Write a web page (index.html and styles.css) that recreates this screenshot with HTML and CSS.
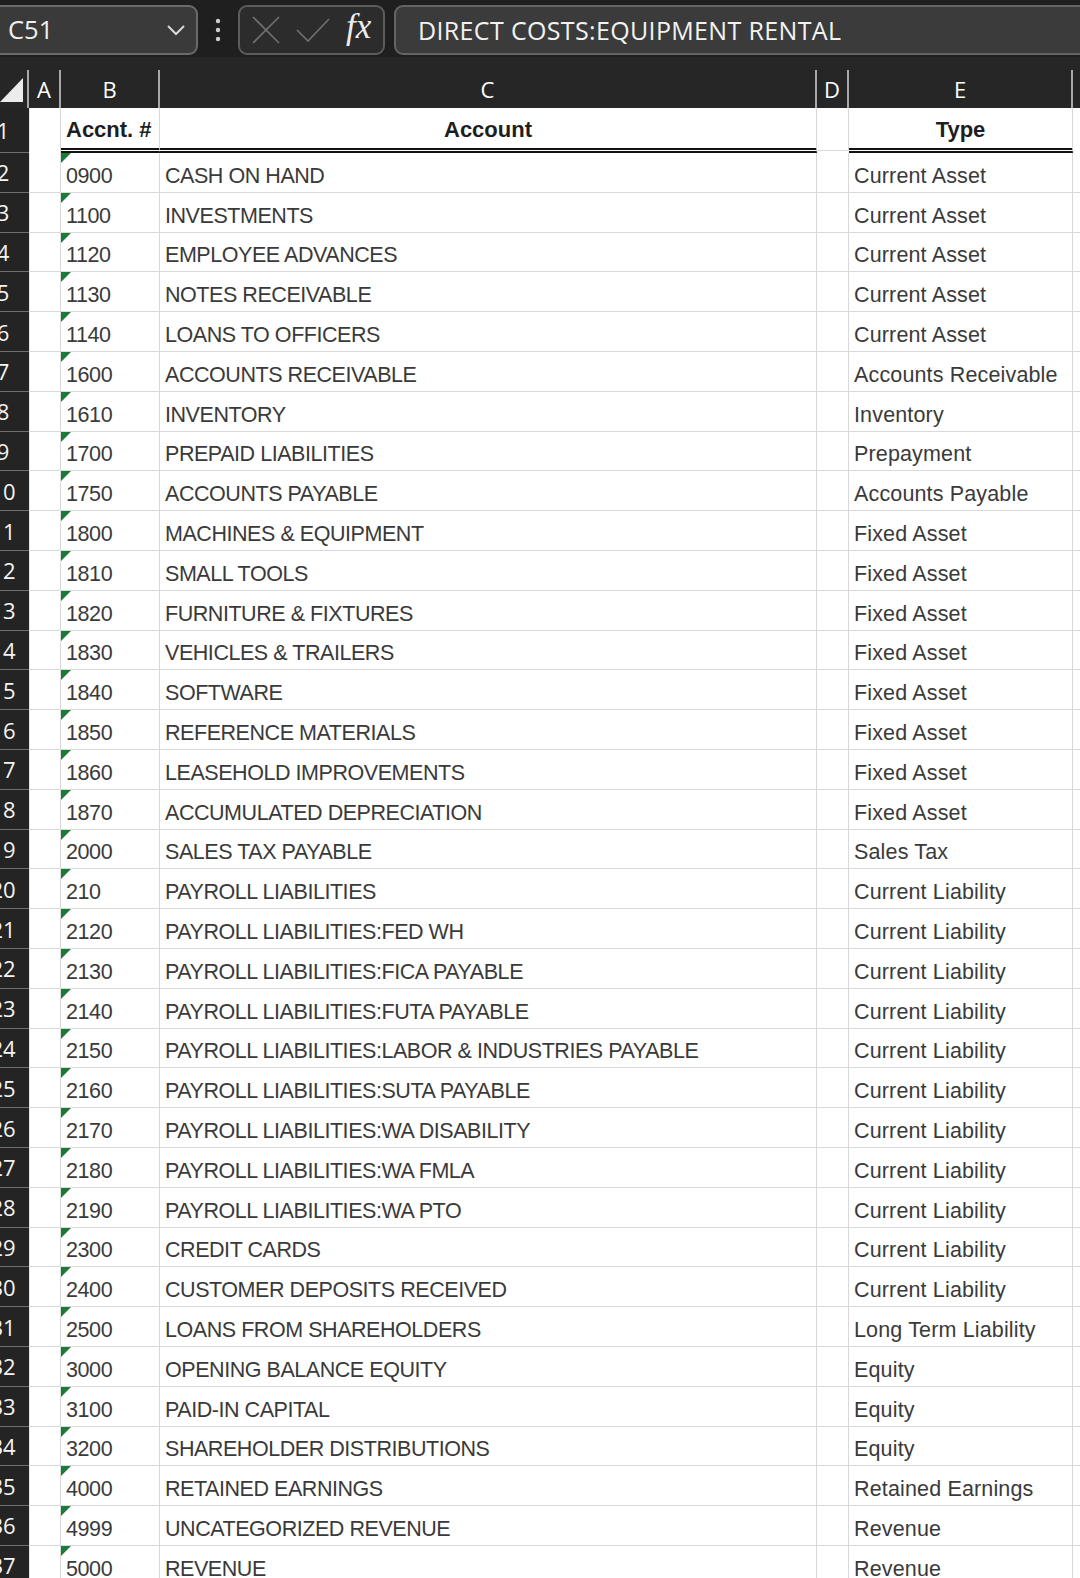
FILE: index.html
```html
<!DOCTYPE html>
<html>
<head>
<meta charset="utf-8">
<link rel="stylesheet" href="styles.css">
</head>
<body>
<div class="app">
  <div class="topbar">
    <div class="namebox">
      <span class="name">C51</span>
      <svg class="chev" width="20" height="12" viewBox="0 0 20 12"><path d="M2 2 L10 10 L18 2" fill="none" stroke="#d8d8d8" stroke-width="2"/></svg>
    </div>
    <svg class="dots" width="8" height="26" viewBox="0 0 8 26"><circle cx="4" cy="4" r="2.2" fill="#cfcfcf"/><circle cx="4" cy="13" r="2.2" fill="#cfcfcf"/><circle cx="4" cy="22" r="2.2" fill="#cfcfcf"/></svg>
    <div class="fxbox">
      <svg width="28" height="28" viewBox="0 0 28 28"><path d="M1 1 L27 27 M27 1 L1 27" stroke="#707070" stroke-width="1.6" fill="none"/></svg>
      <svg width="36" height="28" viewBox="0 0 36 28"><path d="M2 14 L13 25 L34 3" stroke="#707070" stroke-width="1.6" fill="none"/></svg>
      <span class="fx">fx</span>
    </div>
    <div class="formula">DIRECT COSTS:EQUIPMENT RENTAL</div>
  </div>

  <div class="colheads">
    <div class="corner"><svg width="23" height="24" viewBox="0 0 23 24"><polygon points="0,24 23,24 23,0" fill="#ececec"/></svg></div>
    <div class="ch">A</div>
    <div class="ch">B</div>
    <div class="ch">C</div>
    <div class="ch">D</div>
    <div class="ch">E</div>
    <div class="ch last"></div>
  </div>

  <div class="sheet" id="sheet">
    <div class="row head">
      <div class="rh"><span>1</span></div>
      <div class="c a"></div>
      <div class="c b hb">Accnt. #</div>
      <div class="c cc hb center">Account</div>
      <div class="c d"></div>
      <div class="c e hb center">Type</div>
      <div class="c f"></div>
    </div>
  </div>
</div>
<script src="app.js"></script>
</body>
</html>
```

FILE: app.js
```js
const data = [
["0900","CASH ON HAND","Current Asset"],
["1100","INVESTMENTS","Current Asset"],
["1120","EMPLOYEE ADVANCES","Current Asset"],
["1130","NOTES RECEIVABLE","Current Asset"],
["1140","LOANS TO OFFICERS","Current Asset"],
["1600","ACCOUNTS RECEIVABLE","Accounts Receivable"],
["1610","INVENTORY","Inventory"],
["1700","PREPAID LIABILITIES","Prepayment"],
["1750","ACCOUNTS PAYABLE","Accounts Payable"],
["1800","MACHINES & EQUIPMENT","Fixed Asset"],
["1810","SMALL TOOLS","Fixed Asset"],
["1820","FURNITURE & FIXTURES","Fixed Asset"],
["1830","VEHICLES & TRAILERS","Fixed Asset"],
["1840","SOFTWARE","Fixed Asset"],
["1850","REFERENCE MATERIALS","Fixed Asset"],
["1860","LEASEHOLD IMPROVEMENTS","Fixed Asset"],
["1870","ACCUMULATED DEPRECIATION","Fixed Asset"],
["2000","SALES TAX PAYABLE","Sales Tax"],
["210","PAYROLL LIABILITIES","Current Liability"],
["2120","PAYROLL LIABILITIES:FED WH","Current Liability"],
["2130","PAYROLL LIABILITIES:FICA PAYABLE","Current Liability"],
["2140","PAYROLL LIABILITIES:FUTA PAYABLE","Current Liability"],
["2150","PAYROLL LIABILITIES:LABOR & INDUSTRIES PAYABLE","Current Liability"],
["2160","PAYROLL LIABILITIES:SUTA PAYABLE","Current Liability"],
["2170","PAYROLL LIABILITIES:WA DISABILITY","Current Liability"],
["2180","PAYROLL LIABILITIES:WA FMLA","Current Liability"],
["2190","PAYROLL LIABILITIES:WA PTO","Current Liability"],
["2300","CREDIT CARDS","Current Liability"],
["2400","CUSTOMER DEPOSITS RECEIVED","Current Liability"],
["2500","LOANS FROM SHAREHOLDERS","Long Term Liability"],
["3000","OPENING BALANCE EQUITY","Equity"],
["3100","PAID-IN CAPITAL","Equity"],
["3200","SHAREHOLDER DISTRIBUTIONS","Equity"],
["4000","RETAINED EARNINGS","Retained Earnings"],
["4999","UNCATEGORIZED REVENUE","Revenue"],
["5000","REVENUE","Revenue"]
];
const sheet = document.getElementById('sheet');
data.forEach((r, i) => {
  const row = document.createElement('div');
  row.className = 'row';
  row.innerHTML =
    '<div class="rh"><span>' + (i + 2) + '</span></div>' +
    '<div class="c a"></div>' +
    '<div class="c b num"><i class="tri"></i>' + r[0] + '</div>' +
    '<div class="c cc txt"></div>' +
    '<div class="c d"></div>' +
    '<div class="c e typ"></div>' +
    '<div class="c f"></div>';
  row.querySelector('.cc').textContent = r[1];
  row.querySelector('.e').textContent = r[2];
  sheet.appendChild(row);
});
```

FILE: styles.css
```css
html, body {
  margin: 0;
  padding: 0;
  background: #ffffff;
}
body {
  width: 1080px;
  height: 1578px;
  overflow: hidden;
}
.app {
  --cols: 29px 32px 99px 657px 32px 224px 1fr;
}
.topbar {
  height: 57px;
  background: #1f1f1f;
  display: flex;
  align-items: flex-start;
  padding-top: 5px;
  box-sizing: border-box;
  overflow: hidden;
}
.namebox {
  margin-left: -12px;
  width: 210px;
  height: 50px;
  box-sizing: border-box;
  border: 2px solid #6a6a6a;
  border-radius: 9px;
  background: #3a3a3a;
  display: flex;
  align-items: center;
  justify-content: space-between;
  padding: 0 10px 0 18px;
  flex: none;
}
.name {
  font-family: "Open Sans", "Noto Sans", sans-serif;
  font-size: 25.5px;
  color: #f0f0f0;
  margin-top: -2px;
}
.dots {
  margin: 12px 16px 0 16px;
  flex: none;
}
.fxbox {
  width: 147px;
  height: 50px;
  box-sizing: border-box;
  border: 2px solid #5c5c5c;
  border-radius: 9px;
  background: #2c2c2c;
  display: flex;
  align-items: center;
  gap: 15px;
  padding-left: 12px;
  flex: none;
}
.fx {
  font-family: "Liberation Serif", serif;
  font-style: italic;
  font-size: 35px;
  color: #ececec;
  margin-top: -6px;
  margin-left: 0;
}
.formula {
  margin-left: 9px;
  width: 720px;
  height: 50px;
  box-sizing: border-box;
  border: 2px solid #646464;
  border-radius: 9px;
  background: #3b3b3b;
  font-family: "Open Sans", "Noto Sans", sans-serif;
  font-size: 25px;
  letter-spacing: 0.35px;
  color: #f2f2f2;
  display: flex;
  align-items: center;
  padding-left: 22px;
  flex: none;
  white-space: nowrap;
}
.colheads {
  display: grid;
  grid-template-columns: var(--cols);
  height: 51px;
  background: #262626;
  padding-top: 13px;
  box-sizing: border-box;
}
.ch {
  font-family: "Open Sans", "Noto Sans", sans-serif;
  font-size: 22px;
  color: #ffffff;
  display: flex;
  align-items: center;
  justify-content: center;
  border-right: 2px solid #a8a8a8;
}
.ch.last { border-right: 0; }
.corner {
  border-right: 2px solid #a8a8a8;
  display: flex;
  align-items: flex-end;
  padding-bottom: 6px;
}
.sheet {
  display: flex;
  flex-direction: column;
}
.row {
  display: grid;
  grid-template-columns: var(--cols);
  height: 39.8px;
  flex: none;
}
.row.head {
  height: 45px;
}
.rh {
  background: #242424;
  border-bottom: 1px solid #6e6e6e;
  overflow: hidden;
  font-family: "Open Sans", "Noto Sans", sans-serif;
  font-size: 22px;
  color: #f4f4f4;
  display: flex;
  align-items: center;
}
.rh span {
  flex: none;
  width: 60px;
  margin-left: -27px;
  text-align: center;
  white-space: nowrap;
}
.c {
  border-right: 1px solid #d9d9d9;
  border-bottom: 1px solid #d9d9d9;
  box-sizing: border-box;
  font-family: "Liberation Sans", Arial, sans-serif;
  font-size: 21.5px;
  color: #3a3a3a;
  display: flex;
  align-items: flex-end;
  padding: 0 5px 4px 5px;
  white-space: nowrap;
  position: relative;
  line-height: 24px;
}
.c.a { border-left: 1px solid #e3e3e3; }
.c.f { border-right: 0; }
.head .c { border-bottom: 1px solid transparent; }
.head .c.b, .head .c.cc, .head .c.e {
  border-bottom: 5px double #111111;
}
.head .c.d { border-bottom: 1px solid #d9d9d9; margin-bottom: 2px; }
.hb {
  font-weight: bold;
  font-size: 22px;
  color: #1e1e1e;
  padding-bottom: 6px;
}
.center { justify-content: center; }
.num { letter-spacing: -0.4px; }
.txt { letter-spacing: -0.45px; }
.typ { letter-spacing: 0.15px; }
.tri {
  position: absolute;
  left: 0;
  top: 0;
  width: 0;
  height: 0;
  border-top: 10px solid #1c7a38;
  border-right: 10px solid transparent;
}
```
